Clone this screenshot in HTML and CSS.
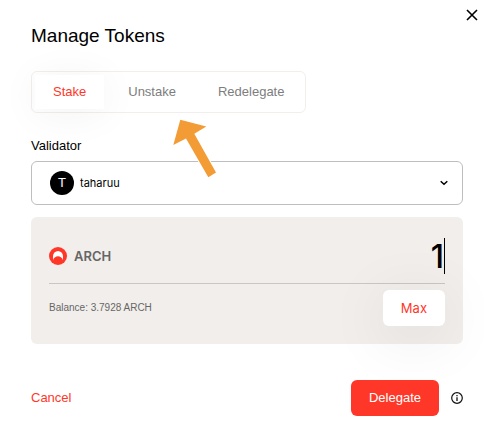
FILE: index.html
```html
<!DOCTYPE html>
<html lang="en">
<head>
<meta charset="utf-8">
<meta name="viewport" content="width=device-width, initial-scale=1">
<title>Manage Tokens</title>
<link rel="stylesheet" href="styles.css">
</head>
<body>
<form class="dialog">
  <button class="close" type="button" aria-label="Close">
    <svg width="12" height="12" viewBox="0 0 12 12" fill="none" stroke="currentColor" stroke-width="1.6"><path d="M1 1l10 10M11 1L1 11"/></svg>
  </button>
  <h1 class="title">Manage Tokens</h1>
  <div class="tabs">
    <button class="tab tab-active" type="button">Stake</button>
    <button class="tab" type="button">Unstake</button>
    <button class="tab" type="button">Redelegate</button>
  </div>
  <label class="label" for="validator">Validator</label>
  <div class="picker">
    <span class="avatar" aria-hidden="true">T</span>
    <select class="select" id="validator"><option>taharuu</option></select>
    <svg width="8" height="6" viewBox="0 0 8 6" fill="none" stroke="#000" stroke-width="1.5"><path d="M.7 1.2L4 4.2l3.300-3"/></svg>
  </div>
  <section class="panel">
    <div class="amount-row">
      <svg width="18" height="18" viewBox="0 0 18 18"><circle cx="9" cy="9" r="9" fill="#ff3729"/><path d="M4 13.200V9.200a5 5.200 0 0 1 10 0v4c-.6-2.200-2.600-3.900-5-3.900s-4.400 1.700-5 3.900z" fill="#fff"/></svg>
      <label class="token" for="amount">ARCH</label>
      <input class="amount" id="amount" type="text" inputmode="decimal" value="1">
    </div>
    <div class="balance-row">
      <span class="balance">Balance: 3.7928 ARCH</span>
      <button class="max" type="button">Max</button>
    </div>
  </section>
  <div class="actions">
    <button class="cancel" type="button">Cancel</button>
    <button class="delegate" type="submit">Delegate</button>
    <svg width="12" height="12" viewBox="0 0 12 12" fill="none" stroke="#111"><circle cx="6" cy="6" r="5.300" stroke-width="1.200"/><path d="M6 5.200V9M6 3v1.200" stroke-width="1.300"/></svg>
  </div>
  <svg class="pointer" width="70" height="75" viewBox="0 0 70 75" aria-hidden="true"><path d="M20.300 9.700L46.300 16.500 34.300 23.700 56 62.500 48.300 67.300 26 28.600 13.300 35z" fill="#f39c35" stroke="#fff" stroke-width="2" paint-order="stroke"/></svg>
</form>
</body>
</html>
```
FILE: styles.css
```css
* { box-sizing: border-box; }
body {
  margin: 0;
  background: #fff;
  color: #000;
  font: 13px/20px "Liberation Sans", Arial, sans-serif;
}
button, input, select {
  margin: 0;
  padding: 0;
  border: 0;
  background: none;
  color: inherit;
  font: inherit;
}
svg { display: block; flex: none; }
.dialog {
  position: relative;
  display: flex;
  flex-direction: column;
  padding: 24px 21px 31px 31px;
}
.close { position: absolute; top: 9px; right: 6px; }
.title { margin: 0 0 23px; font-size: 19px; line-height: 24px; font-weight: 400; }
.tabs {
  display: flex;
  align-self: flex-start;
  gap: 6px;
  padding: 3px;
  border: 1px solid #f2eeec;
  border-radius: 6px;
}
.tab { height: 34px; padding: 0 18px; color: #7d7d7d; }
.tab-active {
  background: #fff;
  color: #ff3729;
  box-shadow: 0 4px 40px rgba(0, 0, 0, .06);
}
.label { margin: 23px 0 5px; }
.picker {
  position: relative;
  display: flex;
  align-items: center;
  height: 44px;
  padding: 0 14px 0 18px;
  border: 1px solid #bebebe;
  border-radius: 6px;
  background: #fff;
}
.avatar {
  width: 24px;
  margin-right: 6px;
  border-radius: 50%;
  background: #000;
  color: #fff;
  line-height: 24px;
  text-align: center;
}
.select { flex: 1; height: 40px; appearance: none; font-family: Inter, sans-serif; font-size: 11px; }
.panel {
  margin-top: 12px;
  padding: 18px;
  border-radius: 6px;
  background: #f2eeeb;
}
.amount-row {
  display: flex;
  align-items: center;
  gap: 7px;
  padding: 3px 0 9px;
  border-bottom: 1px solid #c9c6c4;
  font-family: Inter, sans-serif;
}
.token { color: #666; font-weight: 600; }
.amount {
  flex: 1;
  min-width: 0;
  height: 36px;
  border-right: 1px solid #000;
  font-size: 32px;
  font-weight: 500;
  text-align: right;
}
.balance-row {
  display: flex;
  align-items: center;
  justify-content: space-between;
  padding-top: 6px;
}
.balance { color: #666; font-size: 10px; }
.max {
  height: 36px;
  padding: 0 18px;
  border-radius: 6px;
  background: #fff;
  color: #ff3729;
  font-family: Inter, sans-serif;
  box-shadow: 0 10px 60px rgba(0, 0, 0, .1);
}
.actions { display: flex; align-items: center; gap: 12px; margin-top: 36px; }
.cancel { margin-right: auto; color: #ff3729; }
.delegate {
  height: 36px;
  padding: 0 18px;
  border-radius: 6px;
  background: #ff3729;
  color: #fff;
}
.pointer { position: absolute; top: 110px; left: 160px; pointer-events: none; }
```
